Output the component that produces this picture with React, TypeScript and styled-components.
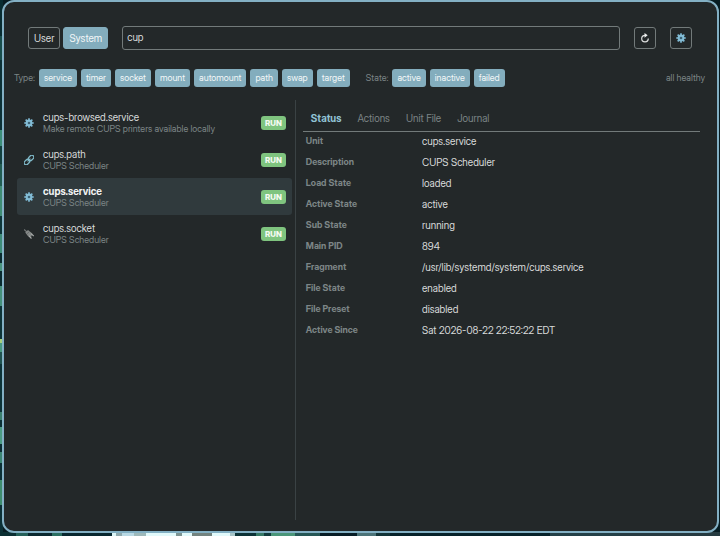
import React, { useState } from "react";
import styled, { createGlobalStyle, css } from "styled-components";

const c = {
  bg: "#232829",
  accent: "#83b0c4",
  chip: "#83adbd",
  text: "#d9dbdb",
  muted: "#7c8586",
  line: "#727a7a",
  rule: "#3a4244",
  selected: "#303a3d",
  run: "#7fc47f",
};

const GlobalStyle = createGlobalStyle`
  * { box-sizing: border-box; }
  body { margin: 0; background: #08242a; }
  button, input { font: inherit; color: inherit; }
`;

const Desktop = styled.div`
  min-height: 100vh;
  display: flex;
  padding: 0 1px 3px 2px;
  font-family: "Inter Display", Inter, "Liberation Sans", sans-serif;
  font-size: 10px;
  line-height: 14px;
  color: ${c.text};
  background:
    linear-gradient(90deg, #0b2f33 0 16px, #25615a 16px 28px, #0a2930 28px 52px, #2b6f62 52px 62px, #082830 62px 112px, #dcf5f7 112px 116px, #8fa9ad 116px 122px, #b9d9e4 122px 134px, #9eb9ba 134px 146px, #e2fafb 146px 176px, #7d9492 176px 182px, #e2fafb 182px 192px, #73837f 192px 212px, #e2fafb 212px 230px, #a8c5c8 230px 235px, #0c3337 235px 256px, #377a67 256px 264px, #123c3e 264px 271px, #4a9679 271px 295px, #255756 295px 320px, #071d26 320px 357px, #4b7378 357px 376px, #123438 376px 390px, #06222a 390px 550px, #234047 550px 620px, #253a40 620px) bottom / 100% 4px no-repeat,
    linear-gradient(#082c31 0 36px, #184e4c 36px 60px, #0b3035 60px 130px, #3c8f79 130px 146px, #12413f 146px 164px, #215d52 164px 186px, #3f8d74 186px 216px, #0d3639 216px 234px, #3d8c78 234px 253px, #0a2c30 253px 263px, #4a957f 263px 271px, #092b30 271px 286px, #45917b 286px 306px, #0d3437 306px 339px, #a6cf79 339px 343px, #48997f 343px 352px, #205450 352px 364px, #0c3337 364px 412px, #3a806e 412px 420px, #0b3035 420px 427px, #4b9c83 427px 444px, #0a2d32 444px 452px, #3b8673 452px 463px, #0b3035 463px 480px, #3e8d6e 480px 505px, #0b3035 505px) left / 3px 100% no-repeat,
    #071c22;
`;

const Frame = styled.main`
  flex: 1;
  min-width: 0;
  display: flex;
  flex-direction: column;
  border: 2px solid ${c.accent};
  border-radius: 12px;
  background: ${c.bg};
`;

const Header = styled.header`
  display: flex;
  align-items: center;
  gap: 14px;
  padding: 24px 25px 0 24px;
`;

const ScopeGroup = styled.div`
  display: flex;
  gap: 3px;
`;

const OutlineButton = styled.button<{ $on?: boolean }>`
  height: 22px;
  min-width: 22px;
  padding: 0 5px;
  display: flex;
  align-items: center;
  justify-content: center;
  border: 1px solid ${(p) => (p.$on ? c.chip : c.line)};
  border-radius: 3px;
  background: ${(p) => (p.$on ? c.chip : "transparent")};
  color: ${(p) => (p.$on ? "#f3f7f8" : c.text)};
`;

const IconButton = styled(OutlineButton)`
  width: 22px;
  padding: 0;
`;

const ButtonPair = styled.div`
  display: flex;
  gap: 14px;
`;

const Search = styled.input`
  flex: 1;
  min-width: 0;
  height: 24px;
  padding: 0 4px 2px;
  border: 1px solid ${c.line};
  border-radius: 3px;
  background: transparent;
  outline: none;
`;

const Filters = styled.div`
  display: flex;
  align-items: center;
  gap: 16px;
  padding: 19px 12px 0 10px;
  font-size: 9px;
  color: ${c.muted};
`;

const ChipGroup = styled.div`
  display: flex;
  align-items: center;
  gap: 4px;
`;

const Chip = styled.button<{ $on: boolean }>`
  height: 18px;
  padding: 0 5px;
  border: 0;
  border-radius: 3px;
  background: ${(p) => (p.$on ? c.chip : c.selected)};
  color: #f2f7f8;
`;

const Health = styled.span`
  margin-left: auto;
`;

const Content = styled.div`
  flex: 1;
  display: grid;
  grid-template-columns: 69fr 100fr;
  padding: 13px 17px 11px 13px;
`;

const UnitList = styled.ul`
  margin: 0;
  padding: 4px 3px 0 0;
  list-style: none;
  border-right: 1px solid ${c.rule};
`;

const UnitRow = styled.button<{ $selected: boolean }>`
  width: 100%;
  height: 37px;
  display: flex;
  align-items: center;
  gap: 9px;
  padding: 0 6px 0 7px;
  border: 0;
  border-radius: 3px;
  text-align: left;
  background: ${(p) => (p.$selected ? c.selected : "transparent")};
`;

const UnitText = styled.span`
  flex: 1;
  min-width: 0;
  display: flex;
  flex-direction: column;
`;

const UnitName = styled.span<{ $selected: boolean }>`
  line-height: 12px;
  ${(p) =>
    p.$selected &&
    css`
      font-weight: 700;
      color: #f0f2f2;
    `}
`;

const UnitSummary = styled.span`
  font-size: 9px;
  line-height: 12px;
  color: ${c.muted};
`;

const RunBadge = styled.span`
  padding: 0 4px;
  border-radius: 3px;
  background: ${c.run};
  color: #f5faf2;
  font-size: 8px;
  font-weight: 800;
`;

const Details = styled.section`
  min-width: 0;
  padding-left: 7px;
`;

const Tabs = styled.div`
  display: flex;
  gap: 16px;
  height: 32px;
  padding: 4px 8px 0;
  border-bottom: 1px solid ${c.line};
`;

const Tab = styled.button<{ $on: boolean }>`
  padding: 0;
  border: 0;
  background: transparent;
  color: ${(p) => (p.$on ? "#91c3d5" : c.muted)};
  font-weight: ${(p) => (p.$on ? 700 : 400)};
`;

const Properties = styled.table`
  width: 100%;
  border-collapse: collapse;
  table-layout: fixed;
`;

const Key = styled.th`
  width: 30%;
  padding: 0 0 3px 3px;
  line-height: 18px;
  font-size: 9px;
  text-align: left;
  font-weight: 700;
  color: ${c.muted};
`;

const Value = styled.td`
  padding: 0 0 3px;
  line-height: 18px;
`;

const Glyph = styled.svg`
  flex: none;
  display: block;
`;

const Gear = () => (
  <Glyph width="10" height="10" viewBox="0 0 20 20" aria-hidden="true">
    <path
      d="M10 .5V19.5M.5 10H19.5M3.3 3.3 16.7 16.7M16.7 3.3 3.3 16.7"
      stroke="#7fbbd6"
      strokeWidth="3.2"
    />
    <circle cx="10" cy="10" r="6.8" fill="#83bdd6" />
    <circle cx="10" cy="10" r="2.6" fill="#3b6275" />
  </Glyph>
);

const Link = () => (
  <Glyph width="10" height="10" viewBox="0 0 20 20" aria-hidden="true">
    <g fill="none" stroke="#7fb9c8" strokeWidth="2.6" transform="rotate(-45 10 10)">
      <rect x="-2" y="6" width="12" height="8" rx="4" />
      <rect x="10" y="6" width="12" height="8" rx="4" />
      <path d="M6 10H14" />
    </g>
  </Glyph>
);

const Plug = () => (
  <Glyph width="10" height="10" viewBox="0 0 20 20" aria-hidden="true">
    <path d="M0 1 6 6" stroke="#707474" strokeWidth="2.6" />
    <path d="M2.5 7 8 2 16.5 9 14.5 15.5 8.5 15Z" fill="#858988" />
    <path d="M14.5 9.5 19.5 14M10 14 15 19" stroke="#a9acab" strokeWidth="2.2" />
    <path d="M6.5 9.5 10 5.5" stroke="#5a5f5f" strokeWidth="1.5" />
  </Glyph>
);

const Reload = () => (
  <Glyph width="10" height="10" viewBox="0 0 20 20" aria-hidden="true">
    <path d="M10 4.6A6.6 6.6 0 1 0 16.6 11.2" fill="none" stroke="#dcdede" strokeWidth="2.4" />
    <path d="M9 0 15.4 4.6 9 9.4Z" fill="#eceeee" />
  </Glyph>
);

const units = [
  { name: "cups-browsed.service", summary: "Make remote CUPS printers available locally", Icon: Gear },
  { name: "cups.path", summary: "CUPS Scheduler", Icon: Link },
  { name: "cups.service", summary: "CUPS Scheduler", Icon: Gear },
  { name: "cups.socket", summary: "CUPS Scheduler", Icon: Plug },
];

const properties = [
  ["Unit", "cups.service"],
  ["Description", "CUPS Scheduler"],
  ["Load State", "loaded"],
  ["Active State", "active"],
  ["Sub State", "running"],
  ["Main PID", "894"],
  ["Fragment", "/usr/lib/systemd/system/cups.service"],
  ["File State", "enabled"],
  ["File Preset", "disabled"],
  ["Active Since", "Sat 2026-08-22 22:52:22 EDT"],
];

const types = ["service", "timer", "socket", "mount", "automount", "path", "swap", "target"];
const states = ["active", "inactive", "failed"];
const tabs = ["Status", "Actions", "Unit File", "Journal"];

export default function App() {
  const [scope, setScope] = useState("System");
  const [query, setQuery] = useState("cup");
  const [off, setOff] = useState<string[]>([]);
  const [selected, setSelected] = useState("cups.service");
  const [tab, setTab] = useState("Status");

  const toggle = (name: string) =>
    setOff((list) => (list.includes(name) ? list.filter((n) => n !== name) : [...list, name]));

  const chips = (names: string[]) =>
    names.map((name) => (
      <Chip
        key={name}
        type="button"
        $on={!off.includes(name)}
        aria-pressed={!off.includes(name)}
        onClick={() => toggle(name)}
      >
        {name}
      </Chip>
    ));

  return (
    <>
      <GlobalStyle />
      <Desktop>
        <Frame>
          <Header>
            <ScopeGroup>
              {["User", "System"].map((name) => (
                <OutlineButton
                  key={name}
                  type="button"
                  $on={scope === name}
                  aria-pressed={scope === name}
                  onClick={() => setScope(name)}
                >
                  {name}
                </OutlineButton>
              ))}
            </ScopeGroup>
            <Search aria-label="Search units" value={query} onChange={(e) => setQuery(e.target.value)} />
            <ButtonPair>
              <IconButton type="button" aria-label="Refresh">
                <Reload />
              </IconButton>
              <IconButton type="button" aria-label="Settings">
                <Gear />
              </IconButton>
            </ButtonPair>
          </Header>
          <Filters>
            <ChipGroup role="group" aria-label="Type">
              <span>Type:</span>
              {chips(types)}
            </ChipGroup>
            <ChipGroup role="group" aria-label="State">
              <span>State:</span>
              {chips(states)}
            </ChipGroup>
            <Health>all healthy</Health>
          </Filters>
          <Content>
            <UnitList>
              {units.map(({ name, summary, Icon }) => (
                <li key={name}>
                  <UnitRow type="button" $selected={selected === name} onClick={() => setSelected(name)}>
                    <Icon />
                    <UnitText>
                      <UnitName $selected={selected === name}>{name}</UnitName>
                      <UnitSummary>{summary}</UnitSummary>
                    </UnitText>
                    <RunBadge>RUN</RunBadge>
                  </UnitRow>
                </li>
              ))}
            </UnitList>
            <Details>
              <Tabs role="tablist">
                {tabs.map((name) => (
                  <Tab
                    key={name}
                    type="button"
                    role="tab"
                    $on={tab === name}
                    aria-selected={tab === name}
                    onClick={() => setTab(name)}
                  >
                    {name}
                  </Tab>
                ))}
              </Tabs>
              <Properties>
                <tbody>
                  {properties.map(([key, value]) => (
                    <tr key={key}>
                      <Key scope="row">{key}</Key>
                      <Value>{value}</Value>
                    </tr>
                  ))}
                </tbody>
              </Properties>
            </Details>
          </Content>
        </Frame>
      </Desktop>
    </>
  );
}
